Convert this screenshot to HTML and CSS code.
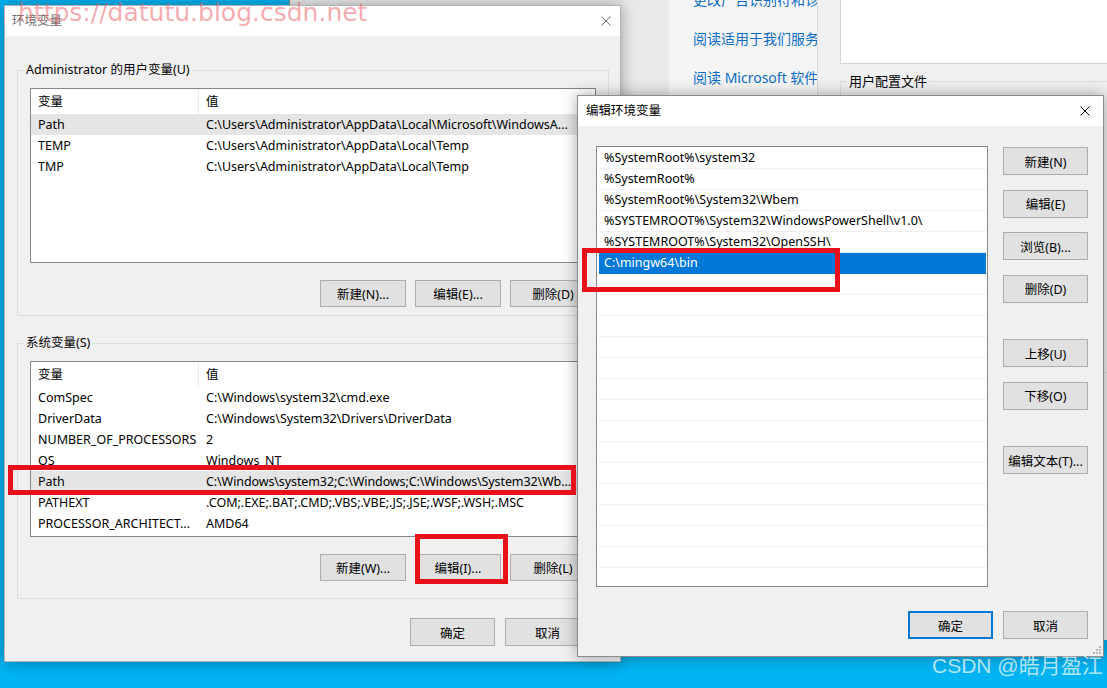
FILE: index.html
```html
<!DOCTYPE html>
<html lang="zh-CN">
<head>
    <meta charset="UTF-8">
    <title>环境变量</title>
    <link rel="stylesheet" href="styles.css">
</head>
<body>
<div class="desktop">

    <div class="bgwin">
        <div class="bg-side"></div>
        <div class="bg-links">
            <a>更改广告识别符和诊断数据设置</a>
            <a>阅读适用于我们服务的隐私声明</a>
            <a>阅读 Microsoft 软件许可条款</a>
        </div>
        <div class="bg-panel">
            <div class="bg-box"></div>
            <fieldset class="bg-group"><legend>用户配置文件</legend></fieldset>
        </div>
    </div>

    <div class="dialog env">
        <div class="titlebar">
            <span class="title">环境变量</span>
            <svg class="close" viewBox="0 0 10 10"><path d="M0.5 0.5L9.5 9.5M9.5 0.5L0.5 9.5"/></svg>
        </div>
        <div class="env-body">
            <fieldset class="group group-user">
                <legend>Administrator 的用户变量(U)</legend>
                <div class="lv lv-user">
                    <div class="lv-head"><span>变量</span><span>值</span></div>
                    <div class="lv-row sel"><span>Path</span><span>C:\Users\Administrator\AppData\Local\Microsoft\WindowsA...</span></div>
                    <div class="lv-row"><span>TEMP</span><span>C:\Users\Administrator\AppData\Local\Temp</span></div>
                    <div class="lv-row"><span>TMP</span><span>C:\Users\Administrator\AppData\Local\Temp</span></div>
                </div>
                <div class="btnrow">
                    <button class="btn">新建(N)...</button>
                    <button class="btn">编辑(E)...</button>
                    <button class="btn">删除(D)</button>
                </div>
            </fieldset>

            <fieldset class="group group-sys">
                <legend>系统变量(S)</legend>
                <div class="lv lv-sys">
                    <div class="lv-head"><span>变量</span><span>值</span></div>
                    <div class="lv-row"><span>ComSpec</span><span>C:\Windows\system32\cmd.exe</span></div>
                    <div class="lv-row"><span>DriverData</span><span>C:\Windows\System32\Drivers\DriverData</span></div>
                    <div class="lv-row"><span>NUMBER_OF_PROCESSORS</span><span>2</span></div>
                    <div class="lv-row"><span>OS</span><span>Windows_NT</span></div>
                    <div class="lv-row sel"><span>Path</span><span class="tight">C:\Windows\system32;C:\Windows;C:\Windows\System32\Wb...</span></div>
                    <div class="lv-row"><span>PATHEXT</span><span>.COM;.EXE;.BAT;.CMD;.VBS;.VBE;.JS;.JSE;.WSF;.WSH;.MSC</span></div>
                    <div class="lv-row"><span>PROCESSOR_ARCHITECT...</span><span>AMD64</span></div>
                </div>
                <div class="btnrow">
                    <button class="btn">新建(W)...</button>
                    <button class="btn">编辑(I)...</button>
                    <button class="btn">删除(L)</button>
                </div>
            </fieldset>

            <div class="footer">
                <button class="btn">确定</button>
                <button class="btn">取消</button>
            </div>
        </div>
    </div>

    <div class="dialog edit">
        <div class="titlebar">
            <span class="title">编辑环境变量</span>
            <svg class="close" viewBox="0 0 10 10"><path d="M0.5 0.5L9.5 9.5M9.5 0.5L0.5 9.5"/></svg>
        </div>
        <div class="edit-body">
            <div class="edit-main">
                <div class="pathlist">
                    <div>%SystemRoot%\system32</div>
                    <div>%SystemRoot%</div>
                    <div>%SystemRoot%\System32\Wbem</div>
                    <div>%SYSTEMROOT%\System32\WindowsPowerShell\v1.0\</div>
                    <div>%SYSTEMROOT%\System32\OpenSSH\</div>
                    <div class="sel">C:\mingw64\bin</div>
                    <div></div><div></div><div></div><div></div><div></div>
                    <div></div><div></div><div></div><div></div><div></div>
                    <div></div><div></div><div></div><div></div><div></div>
                </div>
                <div class="side-btns">
                    <button class="btn">新建(N)</button>
                    <button class="btn">编辑(E)</button>
                    <button class="btn">浏览(B)...</button>
                    <button class="btn">删除(D)</button>
                    <button class="btn sep">上移(U)</button>
                    <button class="btn">下移(O)</button>
                    <button class="btn sep">编辑文本(T)...</button>
                </div>
            </div>
            <div class="footer">
                <button class="btn default">确定</button>
                <button class="btn">取消</button>
            </div>
        </div>
        <svg class="grip" viewBox="0 0 10 10">
            <rect x="8" y="2" width="2" height="2"/>
            <rect x="5" y="5" width="2" height="2"/>
            <rect x="8" y="5" width="2" height="2"/>
            <rect x="2" y="8" width="2" height="2"/>
            <rect x="5" y="8" width="2" height="2"/>
            <rect x="8" y="8" width="2" height="2"/>
        </svg>
    </div>

    <div class="mark mark-path"></div>
    <div class="mark mark-edit"></div>
    <div class="mark mark-bin"></div>

    <div class="wm-url">https://datutu.blog.csdn.net</div>
    <div class="wm-csdn">CSDN @皓月盈江</div>
</div>
</body>
</html>
```

FILE: styles.css
```css
* {
    box-sizing: border-box;
}
body {
    margin: 0;
    font-family: "Noto Sans", "Noto Sans CJK SC", sans-serif;
    font-size: 12.5px;
    color: #000;
}
.desktop {
    position: relative;
    width: 1107px;
    height: 688px;
    overflow: hidden;
    background: #00b3f2;
}

/* window behind the dialogs */
.bgwin {
    position: absolute;
    left: 289px;
    top: 0;
    width: 818px;
    height: 640px;
    display: flex;
    border-left: 1px solid #8a8a8a;
    background: #f0f0f0;
}
.bg-side {
    width: 379px;
    background: #e9e9e9;
}
.bg-links {
    width: 148px;
    padding-left: 24px;
    background: #f5f5f5;
    overflow: hidden;
    white-space: nowrap;
    font-size: 14px;
}
.bg-links a {
    display: block;
    line-height: 39px;
    color: #0a6cc2;
}
.bg-links a:first-child {
    margin-top: -20px;
}
.bg-panel {
    flex: 1;
    border-left: 1px solid #dadada;
    padding-left: 22px;
}
.bg-box {
    height: 64px;
    background: #fff;
    border: 1px solid #d4d4d4;
    border-top: none;
    border-right: none;
}
.bg-group {
    margin: 9px 0 0;
    padding: 0;
    height: 300px;
    border: 1px solid #dcdcdc;
    border-right: none;
}
.bg-group legend {
    margin-left: 6px;
    padding: 0 2px;
    font-size: 13px;
    line-height: 16px;
}

/* dialogs */
.dialog {
    position: absolute;
    background: #f0f0f0;
    box-shadow: 0 0 14px rgba(0, 0, 0, 0.35);
}
.env {
    left: 4px;
    top: 5px;
    width: 617px;
    height: 657px;
    border: 1px solid #b4b4b4;
}
.edit {
    left: 577px;
    top: 95px;
    width: 527px;
    height: 562px;
    border: 1px solid #8c8c8c;
}
.titlebar {
    height: 30px;
    display: flex;
    align-items: center;
    justify-content: space-between;
    padding-bottom: 4px;
    background: #fff;
}
.env .titlebar {
    padding-left: 7px;
    padding-right: 9px;
    color: #6d6d6d;
}
.edit .titlebar {
    padding-left: 8px;
    padding-right: 13px;
}
.close {
    width: 10px;
    height: 10px;
    margin-top: 3px;
    fill: none;
    stroke: currentColor;
    stroke-width: 1;
}
.env-body {
    padding: 0 11px 0 12px;
}
.group {
    margin: 0;
    min-width: 0;
    padding: 10px 12px 8px;
    border: 1px solid #dcdcdc;
}
.group legend {
    margin-left: -6px;
    padding: 0 2px;
    line-height: 16px;
}
.group-user {
    margin-top: 26px;
}
.group-sys {
    margin-top: 19px;
    padding-bottom: 17px;
}

/* list views */
.lv {
    background: #fff;
    border: 1px solid #828790;
    overflow: hidden;
}
.lv-user {
    height: 175px;
}
.lv-sys {
    height: 176px;
}
.lv-head, .lv-row {
    display: grid;
    grid-template-columns: 168px 1fr;
    white-space: nowrap;
}
.lv-head {
    height: 25px;
    line-height: 25px;
}
.lv-head span:first-child {
    border-right: 1px solid #ececec;
}
.lv-row {
    height: 21px;
    line-height: 21px;
}
.lv-head span, .lv-row span {
    padding-left: 7px;
    overflow: hidden;
}
.lv-row .tight {
    letter-spacing: -0.1px;
}
.lv-row.sel {
    background: #e5e5e5;
}

/* buttons */
.btnrow {
    display: flex;
    justify-content: flex-end;
    gap: 9px;
    margin-top: 17px;
}
.btn {
    width: 86px;
    height: 27px;
    padding: 0;
    background: #e1e1e1;
    border: 1px solid #adadad;
    font: inherit;
    color: #000;
}
.btn.default {
    border: 2px solid #0078d7;
}
.footer {
    display: flex;
    justify-content: flex-end;
    gap: 10px;
    margin-top: 19px;
    padding-right: 19px;
}
.footer .btn {
    width: 85px;
    height: 28px;
}

/* edit dialog */
.edit-body {
    padding: 20px 15px 0 18px;
}
.edit-main {
    display: flex;
    gap: 15px;
}
.pathlist {
    width: 392px;
    height: 441px;
    padding: 1px 1px 0 2px;
    background: #fff;
    border: 1px solid #828790;
    overflow: hidden;
}
.pathlist div {
    height: 21px;
    line-height: 20px;
    padding-left: 5px;
    border-bottom: 1px solid #f0f0f0;
    white-space: nowrap;
}
.pathlist .sel {
    background: #0078d7;
    border-bottom-color: #0078d7;
    color: #fff;
}
.side-btns {
    display: flex;
    flex-direction: column;
}
.side-btns .btn {
    width: 85px;
    height: 28px;
    margin-top: 14.5px;
}
.side-btns .btn:first-child {
    margin-top: 1px;
}
.side-btns .btn.sep {
    margin-top: 36.5px;
}
.edit .footer {
    margin-top: 24px;
    padding-right: 0;
}
.grip {
    position: absolute;
    right: 2px;
    bottom: 2px;
    width: 10px;
    height: 10px;
    fill: #b8b8b8;
}

/* red annotation boxes */
.mark {
    position: absolute;
    border: 5px solid #e8101a;
}
.mark-path {
    left: 8px;
    top: 465px;
    width: 568px;
    height: 30px;
}
.mark-edit {
    left: 415px;
    top: 534px;
    width: 93px;
    height: 50px;
}
.mark-bin {
    left: 582px;
    top: 248px;
    width: 258px;
    height: 44px;
}

/* watermarks */
.wm-url {
    position: absolute;
    left: 18px;
    top: 0;
    font-family: "DejaVu Sans", sans-serif;
    font-size: 25px;
    line-height: 1;
    color: rgba(238, 100, 110, 0.55);
}
.wm-csdn {
    position: absolute;
    left: 932px;
    top: 655px;
    font-family: "Liberation Sans", "Noto Sans CJK SC", sans-serif;
    font-size: 21px;
    line-height: 22px;
    color: rgba(255, 255, 255, 0.7);
}
```
